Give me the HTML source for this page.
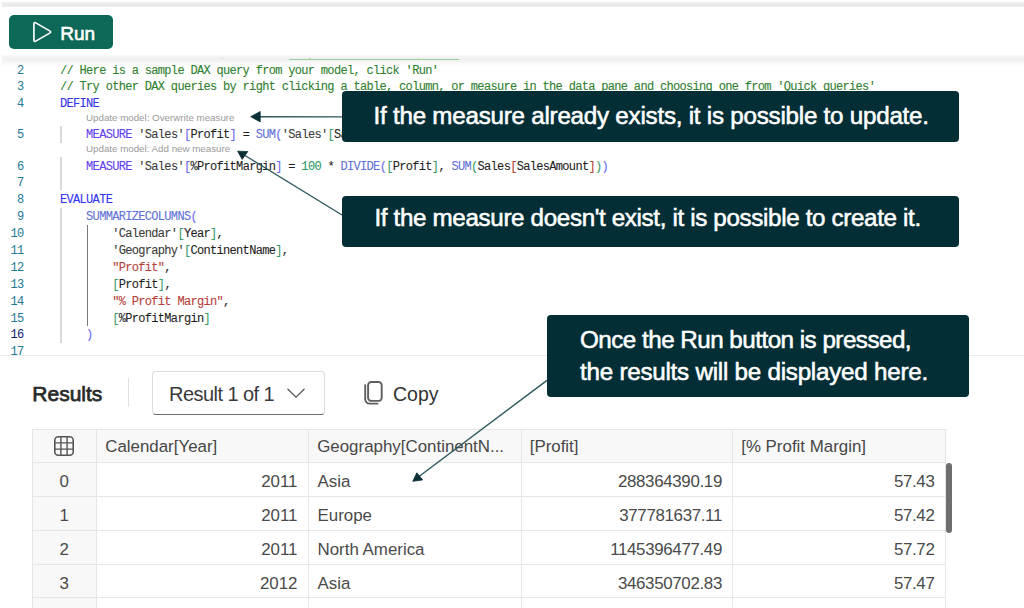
<!DOCTYPE html>
<html><head><meta charset="utf-8">
<style>
*{box-sizing:border-box;margin:0;padding:0}
html,body{width:1024px;height:608px;overflow:hidden;background:#fff}
body{position:relative;font-family:"Liberation Sans",sans-serif}
.abs{position:absolute}
#topband{left:2px;top:1.5px;width:1022px;height:5.5px;background:linear-gradient(#f1f1f1,#eaeaea 55%,#e6e6e6 80%,#f3f3f3)}
#run{left:9px;top:15px;width:104px;height:34px;background:#0e6857;border-radius:5px}
#run span{position:absolute;left:51.3px;top:6.8px;font-size:19px;color:#fff;line-height:24px;-webkit-text-stroke:0.6px #fff}
#tbshadow{left:2px;top:55px;width:1022px;height:12px;background:linear-gradient(#fbfbfb,#f0f0f0 25%,#f2f2f2 45%,#f9f9f9 70%,#fff)}
.ln{position:absolute;left:0;width:23.5px;text-align:right;font-family:"Liberation Mono",monospace;font-size:12px;letter-spacing:-0.68px;line-height:17px;color:#237893}
.cl{position:absolute;left:60px;white-space:pre;font-family:"Liberation Mono",monospace;font-size:12px;letter-spacing:-0.68px;line-height:17px;color:#1f1f1f;-webkit-text-stroke:0.1px currentColor}
.lens{position:absolute;left:86px;font-size:9.75px;line-height:14px;color:#9a9a9a;white-space:pre}
.cm{color:#2f7f2f}.kw{color:#3434f0}.ms{color:#5f3ff0}.fn{color:#5f73d6}.st{color:#3b3b3b}.b1{color:#6a6af0}.b2{color:#3a9a6a}.nm{color:#2a9a6a}.dq{color:#b5403a}.cn{color:#333}
.guide{position:absolute;width:1.5px;background:#d9d9d9}
#sep{left:0;top:355px;width:1024px;height:1px;background:#ececec}
.th{position:absolute;font-size:16.9px;line-height:24px;color:#474747;white-space:pre}
.td{position:absolute;font-size:16.9px;line-height:24px;color:#4a4a4a;white-space:pre}
.note{position:absolute;background:#032e35;border-radius:4px}
.nt{position:absolute;font-size:24.2px;line-height:30px;color:#fff;white-space:pre;letter-spacing:-0.35px;-webkit-text-stroke:0.55px #fff}
</style></head><body>
<div id="topband" class="abs"></div>
<div id="run" class="abs">
<svg class="abs" style="left:23px;top:5px" width="22" height="24" viewBox="0 0 22 24"><path d="M1.9 4 L1.9 20 Q1.9 22.2 3.8 21.1 L17.7 13.1 Q19.6 12 17.7 10.9 L3.8 2.9 Q1.9 1.8 1.9 4 Z" fill="none" stroke="#fff" stroke-width="1.65" stroke-linejoin="round"/></svg>
<span>Run</span></div>
<div id="tbshadow" class="abs"></div>
<div class="abs" style="left:288.5px;top:59px;width:170px;height:1px;background:#9ccf9c"></div>

<div class="abs" style="left:221.5px;top:57.5px;width:1.5px;height:1.2px;background:#b8d8b8"></div><div class="abs" style="left:309px;top:57.5px;width:1.5px;height:1.2px;background:#b8d8b8"></div><div class="abs" style="left:417.5px;top:57.5px;width:1.5px;height:1.2px;background:#b8d8b8"></div>
<!-- line numbers -->
<div class="ln" style="top:62.55px">2</div>
<div class="ln" style="top:79.45px">3</div>
<div class="ln" style="top:96.34px">4</div>
<div class="ln" style="top:127.42px">5</div>
<div class="ln" style="top:158.50px">6</div>
<div class="ln" style="top:175.39px">7</div>
<div class="ln" style="top:192.29px">8</div>
<div class="ln" style="top:209.18px">9</div>
<div class="ln" style="top:226.07px">10</div>
<div class="ln" style="top:242.96px">11</div>
<div class="ln" style="top:259.85px">12</div>
<div class="ln" style="top:276.75px">13</div>
<div class="ln" style="top:293.64px">14</div>
<div class="ln" style="top:310.53px">15</div>
<div class="ln" style="top:327.42px;color:#0b216f">16</div>
<div class="ln" style="top:344.31px">17</div>

<!-- guides -->
<div class="guide" style="left:60px;top:126px;height:16.5px"></div>
<div class="guide" style="left:60px;top:157px;height:33px"></div>
<div class="guide" style="left:60px;top:207.5px;height:135px"></div>
<div class="guide" style="left:87px;top:224.5px;width:1.2px;height:101.5px;background:#7a7a7a"></div>

<!-- code -->
<div class="cl" style="top:62.55px"><span class="cm">// Here is a sample DAX query from your model, click 'Run'</span></div>
<div class="cl" style="top:79.45px"><span class="cm">// Try other DAX queries by right clicking a table, column, or measure in the data pane and choosing one from 'Quick queries'</span></div>
<div class="cl" style="top:96.34px"><span class="kw">DEFINE</span></div>
<div class="lens" style="top:111px">Update model: Overwrite measure</div>
<div class="cl" style="top:127.42px">    <span class="ms">MEASURE</span> <span class="st">'Sales'</span><span class="b1">[</span>Profit<span class="b1">]</span> = <span class="fn">SUM</span><span class="b1">(</span><span class="st">'Sales'</span><span class="b2">[</span>SalesAmount<span class="b2">]</span><span class="b1">)</span></div>
<div class="lens" style="top:142px">Update model: Add new measure</div>
<div class="cl" style="top:158.50px">    <span class="ms">MEASURE</span> <span class="st">'Sales'</span><span class="b1">[</span>%ProfitMargin<span class="b1">]</span> = <span class="nm">100</span> * <span class="fn">DIVIDE</span><span class="b1">(</span><span class="b2">[</span>Profit<span class="b2">]</span>, <span class="fn">SUM</span><span class="b2">(</span>Sales<span class="dq">[</span>SalesAmount<span class="dq">]</span><span class="b2">)</span><span class="b1">)</span></div>
<div class="cl" style="top:192.29px"><span class="kw">EVALUATE</span></div>
<div class="cl" style="top:209.18px">    <span class="fn">SUMMARIZECOLUMNS</span><span class="b1">(</span></div>
<div class="cl" style="top:226.07px">        <span class="st">'Calendar'</span><span class="b2">[</span>Year<span class="b2">]</span>,</div>
<div class="cl" style="top:242.96px">        <span class="st">'Geography'</span><span class="b2">[</span>ContinentName<span class="b2">]</span>,</div>
<div class="cl" style="top:259.85px">        <span class="dq">"Profit"</span>,</div>
<div class="cl" style="top:276.75px">        <span class="b2">[</span>Profit<span class="b2">]</span>,</div>
<div class="cl" style="top:293.64px">        <span class="dq">"% Profit Margin"</span>,</div>
<div class="cl" style="top:310.53px">        <span class="b2">[</span>%ProfitMargin<span class="b2">]</span></div>
<div class="cl" style="top:327.42px">    <span class="b1">)</span></div>

<div id="sep" class="abs"></div>

<!-- results toolbar -->
<div class="abs" style="left:32.3px;top:379.5px;font-size:21px;color:#2a2a2a;line-height:28px;-webkit-text-stroke:0.75px #2a2a2a">Results</div>
<div class="abs" style="left:127.5px;top:378px;width:1px;height:29px;background:#e0e0e0"></div>
<div class="abs" style="left:151.5px;top:370.5px;width:173px;height:44px;border:1px solid #dcdcdc;border-bottom:1.5px solid #6e6e6e;border-radius:4px;background:#fff"></div>
<div class="abs" style="left:169px;top:380.3px;font-size:20px;letter-spacing:-0.55px;color:#3a3a3a;line-height:28px;white-space:pre">Result 1 of 1</div>
<svg class="abs" style="left:286px;top:387px" width="20" height="12" viewBox="0 0 20 12"><path d="M1.5 1.8 L10 10.2 L18.5 1.8" fill="none" stroke="#555" stroke-width="1.25"/></svg>
<svg class="abs" style="left:362px;top:379px" width="24" height="27" viewBox="0 0 24 27"><rect x="6.1" y="3" width="13.6" height="18.9" rx="3.2" fill="none" stroke="#5f5f5f" stroke-width="1.9"/><path d="M3.2 6.2 V20.3 a4.3 4.3 0 0 0 4.3 4.3 H15.6" fill="none" stroke="#5f5f5f" stroke-width="1.9" stroke-linecap="round"/></svg>
<div class="abs" style="left:393px;top:380px;font-size:19.5px;color:#333;line-height:28px">Copy</div>

<!-- table -->
<div class="abs" style="left:32px;top:429px;width:913px;height:179px;background:#fff"></div>
<div class="abs" style="left:32px;top:429px;width:913px;height:33.3px;background:#f8f8f8"></div>
<div class="abs" style="left:32px;top:429px;width:64.5px;height:179px;background:#f8f8f8"></div>
<div class="abs" style="left:31.5px;top:429px;width:1px;height:179px;background:#e6e6e6"></div>
<div class="abs" style="left:96.0px;top:429px;width:1px;height:179px;background:#e6e6e6"></div>
<div class="abs" style="left:308.0px;top:429px;width:1px;height:179px;background:#e6e6e6"></div>
<div class="abs" style="left:520.5px;top:429px;width:1px;height:179px;background:#e6e6e6"></div>
<div class="abs" style="left:732.0px;top:429px;width:1px;height:179px;background:#e6e6e6"></div>
<div class="abs" style="left:944.5px;top:429px;width:1px;height:179px;background:#e6e6e6"></div>
<div class="abs" style="left:32px;top:428.5px;width:913px;height:1px;background:#e6e6e6"></div>
<div class="abs" style="left:32px;top:461.8px;width:913px;height:1px;background:#e6e6e6"></div>
<div class="abs" style="left:32px;top:495.7px;width:913px;height:1px;background:#e6e6e6"></div>
<div class="abs" style="left:32px;top:529.6px;width:913px;height:1px;background:#e6e6e6"></div>
<div class="abs" style="left:32px;top:563.5px;width:913px;height:1px;background:#e6e6e6"></div>
<div class="abs" style="left:32px;top:597.3px;width:913px;height:1px;background:#e6e6e6"></div>
<svg class="abs" style="left:53px;top:435px" width="22" height="22" viewBox="0 0 22 22"><rect x="1.8" y="1.8" width="18.4" height="18.4" rx="3.5" fill="none" stroke="#555" stroke-width="1.6"/><path d="M7.9 1.8V20.2M14.1 1.8V20.2M1.8 7.9H20.2M1.8 14.1H20.2" stroke="#555" stroke-width="1.4"/></svg>
<div class="th" style="left:105.2px;top:434.5px">Calendar[Year]</div>
<div class="th" style="left:317.2px;top:434.5px">Geography[ContinentN...</div>
<div class="th" style="left:529.7px;top:434.5px">[Profit]</div>
<div class="th" style="left:741.2px;top:434.5px">[% Profit Margin]</div>
<div class="td" style="left:32px;width:64.5px;text-align:center;top:469.8px">0</div>
<div class="td" style="left:96.5px;width:201.0px;text-align:right;top:469.8px">2011</div>
<div class="td" style="left:317.5px;top:469.8px">Asia</div>
<div class="td" style="left:521px;width:201.0px;text-align:right;top:469.8px;letter-spacing:-0.33px">288364390.19</div>
<div class="td" style="left:732.5px;width:202.0px;text-align:right;top:469.8px;letter-spacing:-0.33px">57.43</div>
<div class="td" style="left:32px;width:64.5px;text-align:center;top:503.7px">1</div>
<div class="td" style="left:96.5px;width:201.0px;text-align:right;top:503.7px">2011</div>
<div class="td" style="left:317.5px;top:503.7px">Europe</div>
<div class="td" style="left:521px;width:201.0px;text-align:right;top:503.7px;letter-spacing:-0.33px">377781637.11</div>
<div class="td" style="left:732.5px;width:202.0px;text-align:right;top:503.7px;letter-spacing:-0.33px">57.42</div>
<div class="td" style="left:32px;width:64.5px;text-align:center;top:537.6px">2</div>
<div class="td" style="left:96.5px;width:201.0px;text-align:right;top:537.6px">2011</div>
<div class="td" style="left:317.5px;top:537.6px">North America</div>
<div class="td" style="left:521px;width:201.0px;text-align:right;top:537.6px;letter-spacing:-0.33px">1145396477.49</div>
<div class="td" style="left:732.5px;width:202.0px;text-align:right;top:537.6px;letter-spacing:-0.33px">57.72</div>
<div class="td" style="left:32px;width:64.5px;text-align:center;top:571.5px">3</div>
<div class="td" style="left:96.5px;width:201.0px;text-align:right;top:571.5px">2012</div>
<div class="td" style="left:317.5px;top:571.5px">Asia</div>
<div class="td" style="left:521px;width:201.0px;text-align:right;top:571.5px;letter-spacing:-0.33px">346350702.83</div>
<div class="td" style="left:732.5px;width:202.0px;text-align:right;top:571.5px;letter-spacing:-0.33px">57.47</div>
<div class="abs" style="left:945.5px;top:463px;width:6px;height:70px;background:#6e6e6e;border-radius:3px"></div>
<div class="note" style="left:342px;top:91.4px;width:616.8px;height:51px"><div class="nt" style="left:31.5px;top:10px;letter-spacing:-0.24px">If the measure already exists, it is possible to update.</div></div>
<div class="note" style="left:342px;top:195.8px;width:617px;height:51.2px"><div class="nt" style="left:32.5px;top:7.5px">If the measure doesn't exist, it is possible to create it.</div></div>
<div class="note" style="left:547px;top:315px;width:422px;height:82px"><div class="nt" style="left:33px;top:9.5px;letter-spacing:-0.51px">Once the Run button is pressed,</div><div class="nt" style="left:33px;top:42px;letter-spacing:-0.24px">the results will be displayed here.</div></div>
<svg class="abs" style="left:0;top:0" width="1024" height="608" viewBox="0 0 1024 608">
<g stroke="#2c585c" stroke-width="1.4" fill="none">
<path d="M342 116.9 L259 116.8"/>
<path d="M342 215 L245 155.5"/>
<path d="M547 380.4 L419 476.5"/>
</g>
<g fill="#0a3036" stroke="#0a3036" stroke-width="0.8" stroke-linejoin="round">
<path d="M250.7 116.7 L260.2 111.5 L260.2 121.9 Z"/>
<path d="M237.6 151.2 L247.8 151.5 L242.2 159.4 Z"/>
<path d="M412.8 481.3 L416.8 472.8 L422.7 479.9 Z"/>
</g></svg>
</body></html>
